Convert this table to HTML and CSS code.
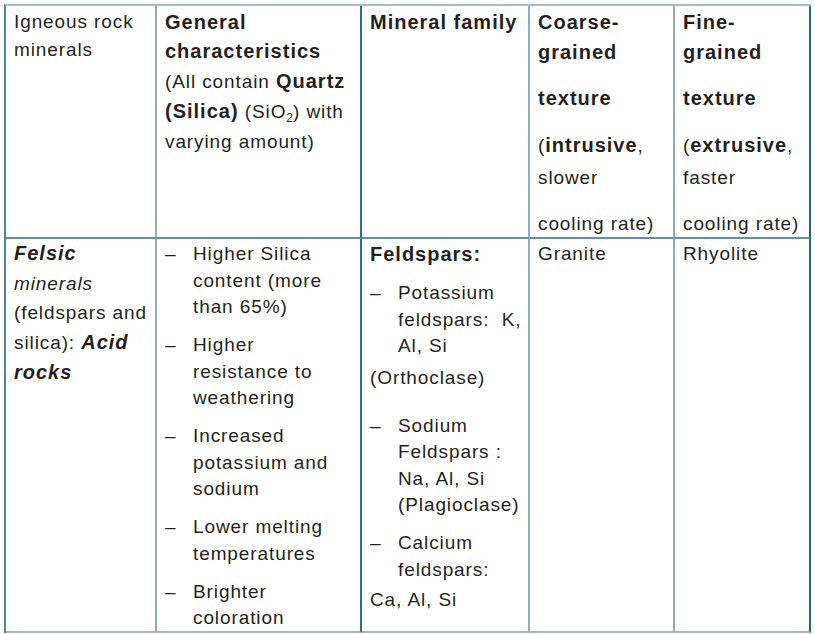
FILE: index.html
```html
<!DOCTYPE html>
<html lang="en">
<head>
<meta charset="utf-8">
<title>Igneous rock minerals</title>
<link rel="stylesheet" href="styles.css">
</head>
<body>
<div class="table">
  <div class="cell c1 head h1">Igneous rock<br>minerals</div>
  <div class="cell c2 head h2"><b>General<br>characteristics</b><br>(All contain <b>Quartz</b><br><b>(Silica)</b> (SiO<sub>2</sub>) with<br>varying amount)</div>
  <div class="cell c3 head h2"><b>Mineral family</b></div>
  <div class="cell c4 head h2 tex">
    <div class="ln"><b>Coarse-</b></div>
    <div class="ln"><b>grained</b></div>
    <div class="ln m16"><b>texture</b></div>
    <div class="ln m17">(<b>intrusive</b>,</div>
    <div class="ln m1">slower</div>
    <div class="ln m16">cooling rate)</div>
  </div>
  <div class="cell c5 head h2 tex">
    <div class="ln"><b>Fine-</b></div>
    <div class="ln"><b>grained</b></div>
    <div class="ln m16"><b>texture</b></div>
    <div class="ln m17">(<b>extrusive</b>,</div>
    <div class="ln m1">faster</div>
    <div class="ln m16">cooling rate)</div>
  </div>

  <div class="cell c1 body b1"><b><i>Felsic</i></b><br><i>minerals</i><br>(feldspars and<br>silica): <b><i>Acid</i></b><br><b><i>rocks</i></b></div>
  <div class="cell c2 body b2">
    <ul class="list">
      <li class="item"><span class="dash">–</span><span>Higher Silica<br>content (more<br>than 65%)</span></li>
      <li class="item"><span class="dash">–</span><span>Higher<br>resistance to<br>weathering</span></li>
      <li class="item"><span class="dash">–</span><span>Increased<br>potassium and<br>sodium</span></li>
      <li class="item"><span class="dash">–</span><span>Lower melting<br>temperatures</span></li>
      <li class="item"><span class="dash">–</span><span>Brighter<br>coloration</span></li>
    </ul>
  </div>
  <div class="cell c3 body b2">
    <div class="ln"><b>Feldspars:</b></div>
    <div class="item g11"><span class="dash">–</span><span>Potassium<br>feldspars:&nbsp; K,<br>Al, Si</span></div>
    <div class="ln g5">(Orthoclase)</div>
    <div class="item g22"><span class="dash">–</span><span>Sodium<br>Feldspars :<br>Na, Al, Si<br>(Plagioclase)</span></div>
    <div class="item g11"><span class="dash">–</span><span>Calcium<br>feldspars:</span></div>
    <div class="ln g4">Ca, Al, Si</div>
  </div>
  <div class="cell c4 body b2">Granite</div>
  <div class="cell c5 body b2">Rhyolite</div>
</div>
</body>
</html>
```

FILE: styles.css
```css
* {
  box-sizing: border-box;
}

body {
  margin: 0;
  background: #ffffff;
  font-family: "Liberation Sans", Arial, sans-serif;
  color: #231f20;
}

.table {
  display: grid;
  grid-template-columns: 151px 205px 168px 145px 136px;
  grid-template-rows: 233px 394px;
  width: max-content;
  margin: 4px 0 0 4px;
  border-top: 2px solid #a6bcc6;
  border-left: 2px solid #4e8696;
}

.cell {
  padding: 0 0 0 8px;
  font-size: 19px;
  letter-spacing: 0.9px;
  white-space: nowrap;
  overflow: hidden;
  border-right: 2px solid #8fadba;
}

.cell b {
  font-size: 20px;
  letter-spacing: 1px;
}

.c2 {
  border-right-color: #2f6f80;
}

.c5 {
  border-right-color: #2a6676;
}

.head {
  border-bottom: 2px solid #5b93a3;
}

.body {
  border-bottom: 2px solid #a3b9c3;
}

.h1 {
  padding-top: 2px;
  line-height: 28px;
}

.h2 {
  padding-top: 1.5px;
  line-height: 29.8px;
}

.h2.tex {
  padding-top: 2px;
}

.b1 {
  padding-top: 0;
  line-height: 29.7px;
}

.b2 {
  padding-top: 2px;
  line-height: 26.5px;
}

.m16 { margin-top: 16.5px; }
.m17 { margin-top: 17.5px; }
.m1 { margin-top: 1.5px; }

.g11 { margin-top: 11.5px; }
.g5 { margin-top: 5px; }
.g22 { margin-top: 21.75px; }
.g4 { margin-top: 4px; }

sub {
  font-size: 12px;
  line-height: 0;
  vertical-align: -4px;
  letter-spacing: 0;
}

.list {
  list-style: none;
  margin: 0;
  padding: 0;
}

.item {
  display: flex;
}

.list .item + .item {
  margin-top: 11.5px;
}

.dash {
  flex: 0 0 28px;
}
```
